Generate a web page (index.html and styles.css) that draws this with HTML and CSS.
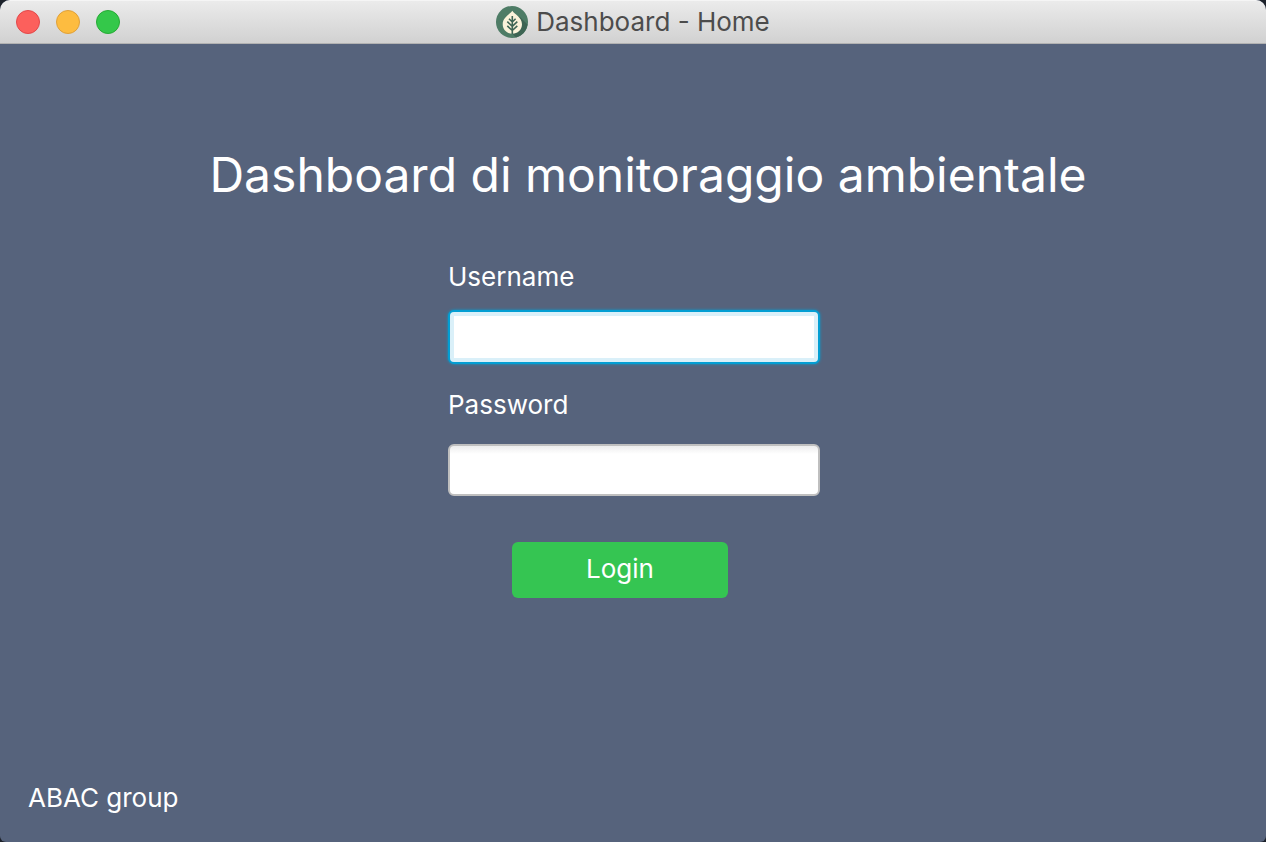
FILE: index.html
```html
<!DOCTYPE html>
<html lang="it">
<head>
<meta charset="utf-8">
<meta name="viewport" content="width=device-width, initial-scale=1">
<title>Dashboard - Home</title>
<link rel="stylesheet" href="styles.css">
</head>
<body>
<div class="window">
  <header class="titlebar">
    <div class="controls">
      <button class="control close" type="button" aria-label="Close"></button>
      <button class="control minimize" type="button" aria-label="Minimize"></button>
      <button class="control expand" type="button" aria-label="Zoom"></button>
    </div>
    <div class="caption">
      <svg class="logo" viewBox="0 0 32 32" aria-hidden="true">
        <circle cx="16" cy="16" r="16" fill="#4e7c66"/>
        <path d="M23.500 10.500L31.500 18.500A16 16 0 0 1 20 31.500L16.300 27.700Z" fill="#3d6453"/>
        <path d="M16.300 4.800C14.500 8.200 6.700 11 6.700 18.300C6.700 23.800 11 27.800 16.300 27.800C21.600 27.800 26 23.800 26 18.300C26 11 18.100 8.200 16.300 4.800Z" fill="#fbf3da"/>
        <path d="M16.300 10V28M16.300 16L13 12.800M16.300 16L19.600 12.800M16.300 20.300L11.300 15.600M16.300 20.300L21.300 15.600M16.300 24.500L11.300 19.900M16.300 24.500L21.300 19.900" fill="none" stroke="#3f6655" stroke-width="1.600"/>
      </svg>
      <span>Dashboard - Home</span>
    </div>
  </header>
  <main class="content">
    <h1 class="heading">Dashboard di monitoraggio ambientale</h1>
    <form class="login">
      <label class="label" for="username">Username</label>
      <input class="field focused" id="username" type="text">
      <label class="label password-label" for="password">Password</label>
      <input class="field password" id="password" type="password">
      <button class="submit" type="button">Login</button>
    </form>
  </main>
  <footer class="footer">ABAC group</footer>
</div>
</body>
</html>
```
FILE: styles.css
```css
* {
  box-sizing: border-box;
}

body {
  margin: 0;
  background: #1d222b;
  color: #fff;
  font: 26px/32px Inter, "Liberation Sans", sans-serif;
}

.window {
  display: flex;
  flex-direction: column;
  min-height: 100vh;
  overflow: hidden;
  border-radius: 10px 10px 6px 6px;
  background: #56637c;
}

.titlebar {
  display: grid;
  grid-template-columns: 1fr auto 1fr;
  align-items: center;
  height: 44px;
  padding: 0 16px;
  border-top: 1px solid #f5f5f5;
  border-bottom: 1px solid #b2b2b2;
  background: linear-gradient(#ebebeb, #d1d1d1);
  color: #4c4c4c;
}

.controls {
  display: flex;
  gap: 16px;
}

.control {
  width: 24px;
  height: 24px;
  padding: 0;
  border: 1px solid;
  border-radius: 50%;
}

.close {
  border-color: #e2484a;
  background: #fc605c;
}

.minimize {
  border-color: #dfa03a;
  background: #fdbc40;
}

.expand {
  border-color: #27aa35;
  background: #34c84a;
}

.caption {
  display: flex;
  align-items: center;
  gap: 8px;
}

.logo {
  width: 32px;
  height: 32px;
}

.content {
  display: flex;
  flex: 1;
  flex-direction: column;
  align-items: center;
  padding: 99px 0 0 2px;
}

.heading {
  margin: 0;
  padding-left: 28px;
  font-size: 48px;
  font-weight: 400;
  line-height: 64px;
  text-align: center;
}

.login {
  display: flex;
  flex-direction: column;
  width: 372px;
  max-width: 100%;
  margin-top: 54px;
}

.field {
  width: 100%;
  height: 52px;
  padding: 0 14px;
  border: 2px solid #bfbfbf;
  border-radius: 6px;
  outline: none;
  background: linear-gradient(#ededed, #fff 8px);
  color: #333;
  font: inherit;
}

.focused {
  height: 54px;
  margin-top: 17px;
  border-color: #039ed3;
  background: #fff;
  box-shadow: inset 0 0 0 4px #daf0f9, 0 0 3px #039ed3;
}

.password-label {
  margin-top: 25px;
}

.password {
  margin-top: 23px;
}

.submit {
  align-self: flex-start;
  width: 216px;
  height: 56px;
  margin: 46px 0 0 64px;
  padding: 0 0 2px;
  border: 0;
  border-radius: 6px;
  background: #35c552;
  color: inherit;
  font: inherit;
}

.footer {
  padding: 0 28px 28px;
}
```
